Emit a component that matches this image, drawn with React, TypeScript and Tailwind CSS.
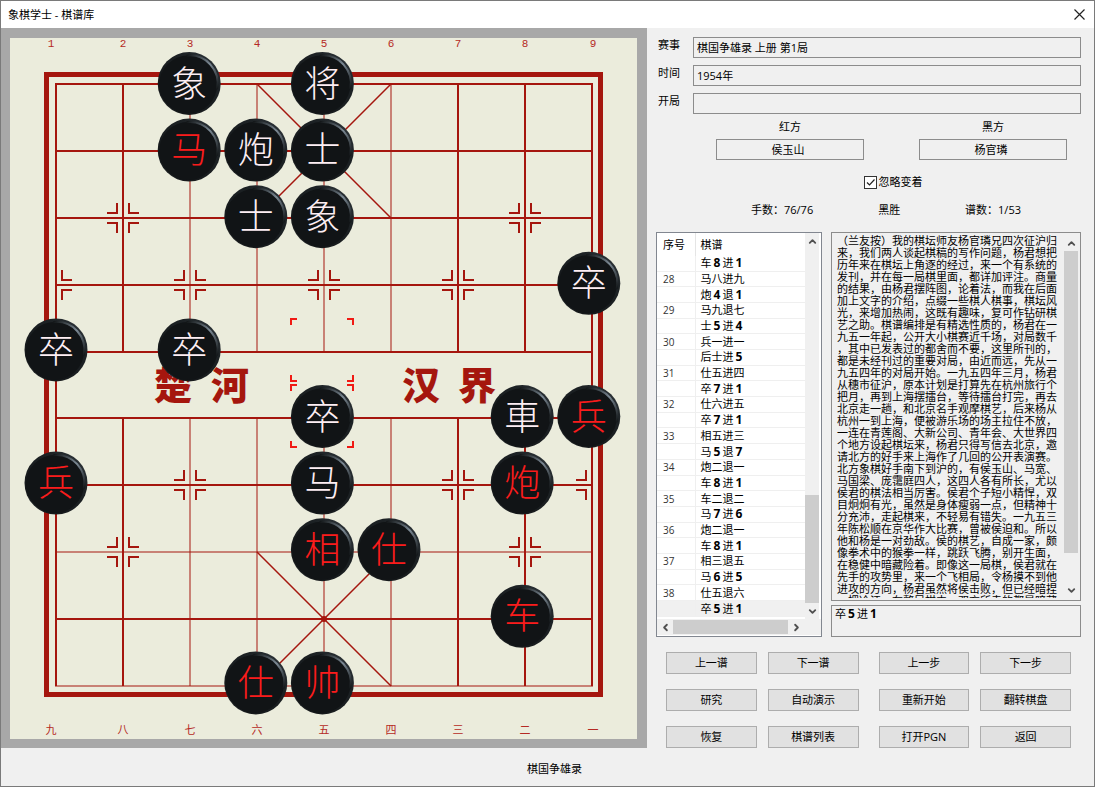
import * as React from 'react';
import { ChevronDown, ChevronLeft, ChevronRight, ChevronUp } from 'lucide-react';

const FONT = "font-['Open_Sans','Noto_Sans_CJK_SC',sans-serif]";
const CJK = "font-['Noto_Sans_CJK_SC',sans-serif]";

/* ---------- board geometry ---------- */

const COLS = [46, 113, 180, 247, 314, 381, 448, 515, 582];
const ROWS = [46, 113, 180, 247, 314, 380, 447, 514, 581, 648];
const COL_WIDTHS = [2, 2, 1, 1, 1, 1, 2, 2, 2];
const ROW_WIDTHS = [2, 2, 2, 2, 2, 2, 2, 1, 2, 1];
const TOP_LABELS = ['1', '2', '3', '4', '5', '6', '7', '8', '9'];
const BOTTOM_LABELS = ['九', '八', '七', '六', '五', '四', '三', '二', '一'];
const LABEL_X = [41, 113, 180, 247, 314, 381, 448, 515, 583];

const LINE = '#a5160e';

type Piece = { col: number; row: number; name: string; red?: boolean };

const PIECES: Piece[] = [
  { col: 2, row: 0, name: '象' },
  { col: 4, row: 0, name: '将' },
  { col: 2, row: 1, name: '马', red: true },
  { col: 3, row: 1, name: '炮' },
  { col: 4, row: 1, name: '士' },
  { col: 3, row: 2, name: '士' },
  { col: 4, row: 2, name: '象' },
  { col: 8, row: 3, name: '卒' },
  { col: 0, row: 4, name: '卒' },
  { col: 2, row: 4, name: '卒' },
  { col: 4, row: 5, name: '卒' },
  { col: 7, row: 5, name: '車' },
  { col: 8, row: 5, name: '兵', red: true },
  { col: 0, row: 6, name: '兵', red: true },
  { col: 4, row: 6, name: '马' },
  { col: 7, row: 6, name: '炮', red: true },
  { col: 4, row: 7, name: '相', red: true },
  { col: 5, row: 7, name: '仕', red: true },
  { col: 7, row: 8, name: '车', red: true },
  { col: 3, row: 9, name: '仕', red: true },
  { col: 4, row: 9, name: '帅', red: true },
];

const MARKS = [
  [1, 2], [7, 2], [0, 3], [2, 3], [4, 3], [6, 3], [8, 3],
  [0, 6], [2, 6], [4, 6], [6, 6], [8, 6], [1, 7], [7, 7],
];

const RIVER = [
  { x: 163, name: '楚' },
  { x: 220, name: '河' },
  { x: 411, name: '汉' },
  { x: 467, name: '界' },
];

function Mark({ col, row }: { col: number; row: number }) {
  const x = COLS[col];
  const y = ROWS[row];
  const left = `M${x - 16} ${y - 5}h10v-10 M${x - 16} ${y + 5}h10v10`;
  const right = `M${x + 16} ${y - 5}h-10v-10 M${x + 16} ${y + 5}h-10v10`;
  return <path d={`${col > 0 ? left : ''} ${col < 8 ? right : ''}`} fill="none" stroke={LINE} strokeWidth="2" />;
}

// corner brackets around a square, used for the last move
function Highlight({ y }: { y: number }) {
  return (
    <path
      d={`M281 ${y + 6}v-6h6 M337 ${y}h6v6 M281 ${y + 56}v6h6 M337 ${y + 62}h6v-6`}
      fill="none"
      stroke="#f01a14"
      strokeWidth="2"
    />
  );
}

function PieceShape({ piece }: { piece: Piece }) {
  const cx = 46 + piece.col * 66.6;
  const cy = 45.5 + piece.row * 66.6;
  return (
    <g>
      <circle cx={cx} cy={cy} r="31.5" fill="url(#rim)" />
      <circle cx={cx - 1} cy={cy + 1} r="29" fill="#111416" />
      <path
        d={`M${cx - 2} ${cy - 28}A28 28 0 0 1 ${cx + 28} ${cy + 5}`}
        fill="none"
        stroke="url(#shine)"
        strokeWidth="2"
        strokeLinecap="round"
      />
      <text
        x={cx}
        y={cy + 13}
        textAnchor="middle"
        fontSize="36"
        fill={piece.red ? '#fa1c1c' : '#fdeef3'}
        className={`${CJK} font-light`}
      >
        {piece.name}
      </text>
    </g>
  );
}

function Board() {
  return (
    <svg viewBox="0 0 627 701" className="block h-auto w-full bg-[#ebecdc]" role="img" aria-label="棋盘">
      <defs>
        <linearGradient id="rim" x1="0" y1="1" x2="1" y2="0">
          <stop offset="0" stopColor="#3a4043" />
          <stop offset="0.2" stopColor="#15181a" />
          <stop offset="0.7" stopColor="#1d2225" />
          <stop offset="1" stopColor="#343c42" />
        </linearGradient>
        <linearGradient id="shine" x1="0" y1="0" x2="1" y2="1">
          <stop offset="0" stopColor="#14181a" />
          <stop offset="0.5" stopColor="#7c8994" />
          <stop offset="1" stopColor="#14181a" />
        </linearGradient>
      </defs>

      {TOP_LABELS.map((label, i) => (
        <text key={label} x={LABEL_X[i]} y="9" textAnchor="middle" fontSize="11" fill="#b52a24" className="font-['Liberation_Mono',monospace]">
          {label}
        </text>
      ))}
      {BOTTOM_LABELS.map((label, i) => (
        <text key={label} x={LABEL_X[i]} y="696" textAnchor="middle" fontSize="11" fill="#b52a24" className={CJK}>
          {label}
        </text>
      ))}

      <rect x="36.5" y="36.5" width="554" height="620" fill="none" stroke={LINE} strokeWidth="5" />
      {ROWS.map((y, i) => (
        <line key={y} x1="45" x2="583" y1={y} y2={y} stroke={LINE} strokeWidth={ROW_WIDTHS[i]} />
      ))}
      {COLS.map((x, i) => (
        <path
          key={x}
          d={i === 0 || i === 8 ? `M${x} 46V648` : `M${x} 46V314 M${x} 380V648`}
          stroke={LINE}
          strokeWidth={COL_WIDTHS[i]}
        />
      ))}
      <path d="M247 46L381 180 M381 46L247 180 M247 514L381 648 M381 514L247 648" stroke={LINE} strokeWidth="1.5" />
      <circle cx="314" cy="581" r="3" fill={LINE} />
      {MARKS.map(([col, row]) => (
        <Mark key={`${col}-${row}`} col={col} row={row} />
      ))}

      {RIVER.map((char) => (
        <text key={char.name} x={char.x} y="361" textAnchor="middle" fontSize="38" fontWeight="900" fill={LINE} className={CJK}>
          {char.name}
        </text>
      ))}

      <Highlight y={281} />
      <Highlight y={347} />
      {PIECES.map((piece) => (
        <PieceShape key={`${piece.col}-${piece.row}`} piece={piece} />
      ))}
    </svg>
  );
}

/* ---------- game data ---------- */

const MOVES: [string, string][] = [
  ['', '车8进1'],
  ['28', '马八进九'],
  ['', '炮4退1'],
  ['29', '马九退七'],
  ['', '士5进4'],
  ['30', '兵一进一'],
  ['', '后士进5'],
  ['31', '仕五进四'],
  ['', '卒7进1'],
  ['32', '仕六进五'],
  ['', '卒7进1'],
  ['33', '相五进三'],
  ['', '马5退7'],
  ['34', '炮二退一'],
  ['', '车8进1'],
  ['35', '车二退二'],
  ['', '马7进6'],
  ['36', '炮二退一'],
  ['', '车8进1'],
  ['37', '相三退五'],
  ['', '马6进5'],
  ['38', '仕五退六'],
  ['', '卒5进1'],
];

const COMMENT = [
  '（兰友按）我的棋坛师友杨官璘兄四次征沪归',
  '来，我们两人谈起棋稿的写作问题，杨君想把',
  '历年来在棋坛上角逐的经过，来一个有系统的',
  '发刊，并在每一局棋里面，都详加评注。商量',
  '的结果，由杨君摆阵图，论着法，而我在后面',
  '加上文字的介绍，点缀一些棋人棋事，棋坛风',
  '光，来增加热闹，这既有趣味，复可作钻研棋',
  '艺之助。棋谱编排是有精选性质的，杨君在一',
  '九五一年起，公开大小棋赛近千场，对局数千',
  '，其中已发表过的都舍而不要，这里所刊的，',
  '都是未经刊过的重要对局，由近而远，先从一',
  '九五四年的对局开始。一九五四年三月，杨君',
  '从穗市征沪，原本计划是打算先在杭州旅行个',
  '把月，再到上海摆擂台，等待擂台打完，再去',
  '北京走一趟，和北京名手观摩棋艺，后来杨从',
  '杭州一到上海，便被游乐场的场主拉住不放，',
  '一连在青莲阁、大新公司、青年会、大世界四',
  '个地方设起棋坛来，杨君只得写信去北京，邀',
  '请北方的好手来上海作了几回的公开表演赛。',
  '北方象棋好手南下到沪的，有侯玉山、马宽、',
  '马国梁、庞霭庭四人，这四人各有所长，尤以',
  '侯君的棋法相当厉害。侯君个子短小精悍，双',
  '目炯炯有光，虽然是身体瘦弱一点，但精神十',
  '分充沛，走起棋来，不轻易有错失。一九五三',
  '年陈松顺在京华作大比赛，曾被侯迫和。所以',
  '他和杨是一对劲敌。侯的棋艺，自成一家，颇',
  '像拳术中的猴拳一样，跳跃飞腾，别开生面，',
  '在稳健中暗藏险着。即像这一局棋，侯君就在',
  '先手的攻势里，来一个飞相局，令杨摸不到他',
  '进攻的方向，杨君虽然将侯击败，但已经暗捏',
  '一把冷汗。在整局棋中，双方所走的都是暗藏',
].join('\n');

const BUTTONS = [
  [['上一谱', '下一谱'], ['研究', '自动演示'], ['恢复', '棋谱列表']],
  [['上一步', '下一步'], ['重新开始', '翻转棋盘'], ['打开PGN', '返回']],
];

/* ---------- side panel ---------- */

// arabic digits are bold and take a full character cell
function MoveText({ text }: { text: string }) {
  return (
    <>
      {text.split('').map((char, i) =>
        /\d/.test(char) ? (
          <span key={i} className="inline-block w-[11px] text-center text-xs leading-3 font-bold">
            {char}
          </span>
        ) : (
          char
        )
      )}
    </>
  );
}

function Field({ id, label, value }: { id: string; label: string; value: string }) {
  return (
    <div className="flex gap-3">
      <label htmlFor={id} className="w-[23px] shrink-0 whitespace-nowrap">
        {label}
      </label>
      <input
        id={id}
        readOnly
        defaultValue={value}
        className="h-[21px] min-w-0 flex-1 border border-[#8c8c8c] bg-[#f0f0f0] px-[3px] pb-0.5 outline-none"
      />
    </div>
  );
}

function Player({ id, label, value }: { id: string; label: string; value: string }) {
  return (
    <div className="flex flex-col items-center gap-1">
      <label htmlFor={id}>{label}</label>
      <input
        id={id}
        readOnly
        defaultValue={value}
        className="h-[21px] w-full border border-[#8c8c8c] bg-[#f0f0f0] pr-1 pb-0.5 text-center outline-none"
      />
    </div>
  );
}

const ARROW = 'flex h-4 w-4 shrink-0 items-center justify-center text-[#505050]';

function MoveList() {
  return (
    <div className="flex w-[166px] shrink-0 flex-col border border-[#828790] bg-white">
      <div className="flex min-h-0 flex-1">
        <table className="h-[384px] flex-1 border-collapse text-left">
          <thead>
            <tr className="h-[23px]">
              <th scope="col" className="w-[38px] border-r border-[#e5e5e5] pl-1.5 font-normal">序号</th>
              <th scope="col" className="pl-[5px] font-normal">棋谱</th>
            </tr>
          </thead>
          <tbody className="leading-3">
            {MOVES.map(([no, move], i) => (
              <tr key={i} className={`border-b border-[#efefef] ${i === MOVES.length - 1 ? 'bg-[#f0f0f0]' : ''}`}>
                <td className="border-r border-[#efefef] p-0 pl-1.5 text-[10px] text-[#333]">{no}</td>
                <td className="p-0 pl-[5px]">
                  <MoveText text={move} />
                </td>
              </tr>
            ))}
          </tbody>
        </table>
        <div className="mr-0.5 flex w-[14px] flex-col items-center bg-[#f0f0f0]">
          <button aria-label="向上滚动" className={ARROW}>
            <ChevronUp size={11} strokeWidth={4} />
          </button>
          <div className="flex w-full flex-1 flex-col justify-end">
            <div className="h-[108px] bg-[#cdcdcd]" />
          </div>
          <button aria-label="向下滚动" className={ARROW}>
            <ChevronDown size={11} strokeWidth={4} />
          </button>
        </div>
      </div>
      <div className="mb-px flex h-4 items-center bg-[#f0f0f0]">
        <button aria-label="向左滚动" className={ARROW}>
          <ChevronLeft size={11} strokeWidth={4} />
        </button>
        <div className="h-[14px] w-[115px] bg-[#cdcdcd]" />
        <button aria-label="向右滚动" className={ARROW}>
          <ChevronRight size={11} strokeWidth={4} />
        </button>
      </div>
    </div>
  );
}

function Comments() {
  return (
    <div className="flex min-w-0 flex-1 flex-col gap-1">
      <div className="flex h-[369px] border border-[#8c8c8c] py-0.5">
        <textarea
          readOnly
          aria-label="注解"
          defaultValue={COMMENT}
          className="h-full min-w-0 flex-1 resize-none overflow-hidden pl-[5px] leading-3 whitespace-pre outline-none"
        />
        <div className="mr-0.5 flex w-[14px] flex-col items-center">
          <button aria-label="向上滚动" className={ARROW}>
            <ChevronUp size={11} strokeWidth={4} />
          </button>
          <div className="w-full flex-1">
            <div className="h-[302px] bg-[#cdcdcd]" />
          </div>
          <button aria-label="向下滚动" className={ARROW}>
            <ChevronDown size={11} strokeWidth={4} />
          </button>
        </div>
      </div>
      <div className="h-8 border border-[#8c8c8c] px-[3px] leading-4">
        <MoveText text="卒5进1" />
      </div>
    </div>
  );
}

function SidePanel() {
  return (
    <section className="flex min-w-0 flex-col pt-[9px] pr-[13px] pl-[9px]">
      <div className="flex flex-col gap-[7px] pl-0.5">
        <Field id="event" label="赛事" value="棋国争雄录 上册 第1局" />
        <Field id="date" label="时间" value="1954年" />
        <Field id="opening" label="开局" value="" />
      </div>

      <div className="mt-[5px] grid grid-cols-2 gap-[55px] pr-[14px] pl-[60px]">
        <Player id="red" label="红方" value="侯玉山" />
        <Player id="black" label="黑方" value="杨官璘" />
      </div>

      <label className="mt-[14px] flex items-center justify-center gap-0.5 pr-[11px] pl-[60px]">
        <span className="relative flex h-[13px] w-[13px]">
          <input type="checkbox" defaultChecked className="peer h-[13px] w-[13px] appearance-none border border-[#333] bg-white" />
          <svg viewBox="0 0 13 13" className="pointer-events-none absolute inset-0 hidden h-[13px] w-[13px] peer-checked:block">
            <path d="M3 6.5L5.5 9L10.5 3.5" fill="none" stroke="#222" strokeWidth="1.2" />
          </svg>
        </span>
        忽略变着
      </label>

      <div className="mt-3 flex justify-between pr-[60px] pl-[95px]">
        <span>手数：76/76</span>
        <span>黑胜</span>
        <span>谱数：1/53</span>
      </div>

      <div className="mt-[14px] flex h-[405px] gap-[9px]">
        <MoveList />
        <Comments />
      </div>

      <div className="mt-[15px] grid grid-cols-2 gap-5 px-[10px]">
        {BUTTONS.map((group, g) => (
          <div key={g} className="grid grid-cols-2 gap-x-[11px] gap-y-[15px]">
            {group.flat().map((label) => (
              <button key={label} className="h-[22px] border border-[#adadad] bg-[#e1e1e1] leading-4">
                {label}
              </button>
            ))}
          </div>
        ))}
      </div>
    </section>
  );
}

export default function App() {
  return (
    <div className={`flex min-h-screen flex-col border border-[#7a7a7a] bg-[#f0f0f0] text-[11px] leading-4 text-black ${FONT}`}>
      <header className="flex h-[27px] items-center justify-between bg-white pr-[9px] pl-[7px]">
        <h1>象棋学士 - 棋谱库</h1>
        <button aria-label="关闭">
          <svg viewBox="0 0 11 11" className="h-[11px] w-[11px]">
            <path d="M0.5 0.5L10.5 10.5M10.5 0.5L0.5 10.5" stroke="#222" strokeWidth="1.2" />
          </svg>
        </button>
      </header>
      <main className="grid grid-cols-[646fr_447fr] items-start">
        <div className="bg-[#a8a8a8] pt-[10px] pr-[10px] pb-[9px] pl-[9px]">
          <Board />
        </div>
        <SidePanel />
      </main>
      <footer className="flex flex-1 items-center justify-center pt-1 pl-[14px]">棋国争雄录</footer>
    </div>
  );
}
